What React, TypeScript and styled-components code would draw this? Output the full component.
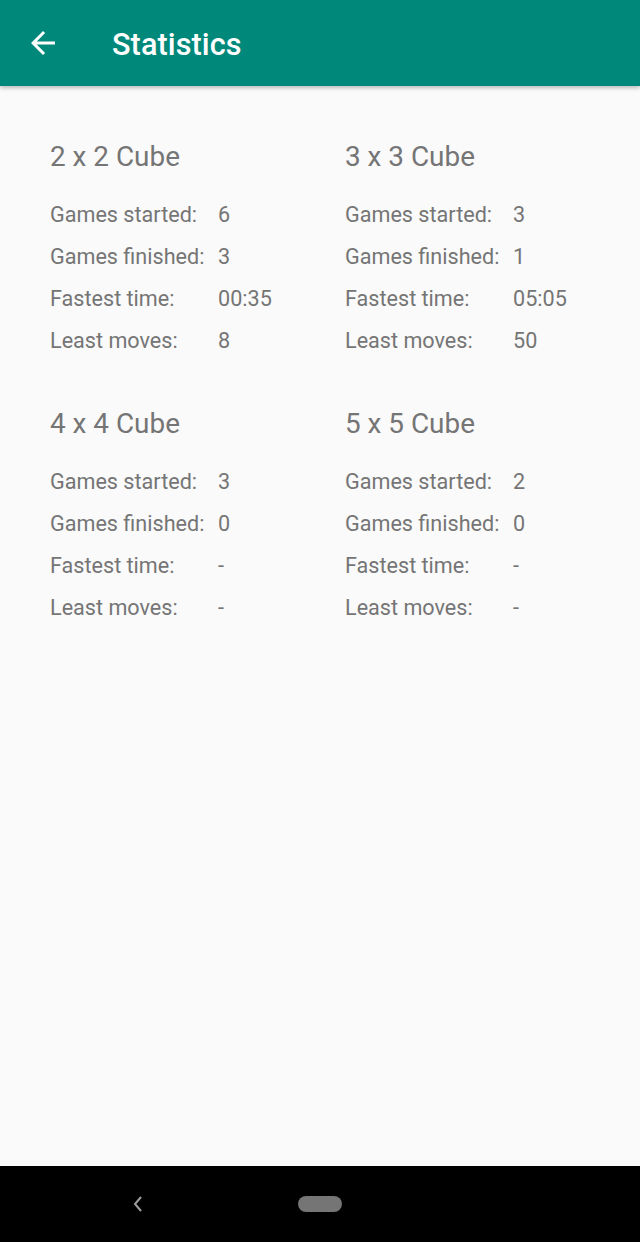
import React from "react";
import styled, { createGlobalStyle } from "styled-components";

const Global = createGlobalStyle`
  html, body { margin: 0; padding: 0; }
  body { font-family: Roboto, "Noto Sans", sans-serif; background: #fafafa; }
`;

const Screen = styled.div`
  width: 640px;
  height: 1242px;
  display: flex;
  flex-direction: column;
  background: #fafafa;
  overflow: hidden;
`;

const AppBar = styled.header`
  height: 86px;
  flex: none;
  background: #00897b;
  display: flex;
  align-items: center;
  padding-left: 25px;
  box-shadow: 0 2px 4px rgba(0, 0, 0, 0.25);
  position: relative;
  z-index: 1;
`;

const BackButton = styled.button`
  width: 36px;
  height: 36px;
  padding: 0;
  border: none;
  background: transparent;
  display: flex;
  align-items: center;
  justify-content: center;
  margin-right: 51px;
`;

const Title = styled.h1`
  margin: 0;
  margin-top: 2px;
  color: #ffffff;
  font-family: Roboto, sans-serif;
  font-weight: 500;
  font-size: 30.6px;
  letter-spacing: 0.1px;
`;

const Content = styled.main`
  flex: 1;
  display: grid;
  grid-template-columns: 295px 295px;
  align-content: start;
  row-gap: 44px;
  padding: 52px 0 0 50px;
`;

const Block = styled.section`
  display: flex;
  flex-direction: column;
`;

const Heading = styled.h2`
  margin: 0 0 17px 0;
  font-weight: 400;
  font-size: 27.9px;
  line-height: 38px;
  color: #757575;
`;

const Row = styled.div`
  display: flex;
  height: 42px;
  align-items: center;
  font-size: 21.6px;
  color: #757575;
`;

const Label = styled.span`
  width: 168px;
  flex: none;
`;

const Value = styled.span``;

const NavBar = styled.nav`
  height: 76px;
  flex: none;
  background: #000;
  display: flex;
  align-items: center;
`;

const NavBack = styled.div`
  width: 20px;
  display: flex;
  justify-content: center;
  margin-left: 128px;
  margin-right: 150px;
`;

const Pill = styled.div`
  width: 44px;
  height: 16px;
  border-radius: 8px;
  background: #757575;
`;

const stats = [
  { title: "2 x 2 Cube", started: "6", finished: "3", time: "00:35", moves: "8" },
  { title: "3 x 3 Cube", started: "3", finished: "1", time: "05:05", moves: "50" },
  { title: "4 x 4 Cube", started: "3", finished: "0", time: "-", moves: "-" },
  { title: "5 x 5 Cube", started: "2", finished: "0", time: "-", moves: "-" },
];

export default function App() {
  return (
    <Screen>
      <Global />
      <AppBar>
        <BackButton aria-label="Back">
          <svg width="36" height="36" viewBox="0 0 24 24">
            <path
              d="M20 11H7.83l5.59-5.59L12 4l-8 8 8 8 1.41-1.41L7.83 13H20v-2z"
              fill="#fff"
            />
          </svg>
        </BackButton>
        <Title>Statistics</Title>
      </AppBar>
      <Content>
        {stats.map((s) => (
          <Block key={s.title}>
            <Heading>{s.title}</Heading>
            <Row><Label>Games started:</Label><Value>{s.started}</Value></Row>
            <Row><Label>Games finished:</Label><Value>{s.finished}</Value></Row>
            <Row><Label>Fastest time:</Label><Value>{s.time}</Value></Row>
            <Row><Label>Least moves:</Label><Value>{s.moves}</Value></Row>
          </Block>
        ))}
      </Content>
      <NavBar>
        <NavBack>
          <svg width="12" height="18" viewBox="0 0 12 18">
            <path d="M9 2 L3 9 L9 16" stroke="#9e9e9e" strokeWidth="2" fill="none" />
          </svg>
        </NavBack>
        <Pill />
      </NavBar>
    </Screen>
  );
}
